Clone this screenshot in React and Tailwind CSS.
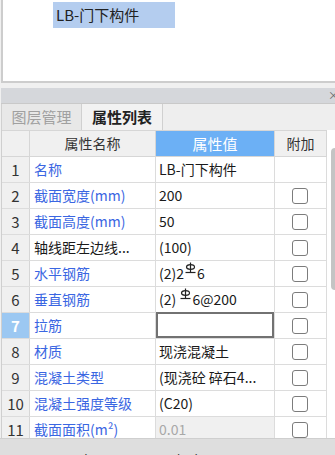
import React from "react";

const Rebar = () => (
  <svg width="11" height="12" viewBox="0 0 11 12" className="inline-block align-top mt-[1px] mx-[1px]" fill="none" stroke="#222" strokeWidth="1.2">
    <line x1="5.5" y1="0.5" x2="5.5" y2="10" />
    <ellipse cx="5.5" cy="5" rx="4" ry="2.3" />
    <line x1="0.5" y1="10.5" x2="10.5" y2="10.5" />
  </svg>
);

const rows = [
  { n: "1", name: "名称", val: "LB-门下构件", blue: true, noBox: true },
  { n: "2", name: "截面宽度(mm)", val: "200", blue: true },
  { n: "3", name: "截面高度(mm)", val: "50", blue: true },
  { n: "4", name: "轴线距左边线...", val: "(100)", blue: false },
  { n: "5", name: "水平钢筋", val: <>(2)2<Rebar />6</>, blue: true },
  { n: "6", name: "垂直钢筋", val: <>(2) <Rebar />6@200</>, blue: true },
  { n: "7", name: "拉筋", val: "", blue: true, active: true },
  { n: "8", name: "材质", val: "现浇混凝土", blue: true },
  { n: "9", name: "混凝土类型", val: "(现浇砼 碎石4...", blue: true },
  { n: "10", name: "混凝土强度等级", val: "(C20)", blue: true },
  { n: "11", name: "截面面积(m²)", val: "0.01", blue: true, grey: true },
];

const Check = () => (
  <div className="w-[16px] h-[16px] border border-[#7c7c7c] rounded-[3px] bg-white" />
);

export default function App() {
  return (
    <div className="w-[335px] h-[455px] overflow-hidden bg-[#f0f0f0] font-['Noto_Sans_CJK_SC',sans-serif] relative">
      {/* top panel */}
      <div className="h-[83px] bg-white border-l-2 border-b-2 border-[#cdcdcd] ml-[1px] pt-[2px] pl-[50px]">
        <div className="w-[122px] h-[26px] bg-[#b4cdef] text-[15px] leading-[26px] text-[#222] pl-[3px]">
          LB-门下构件
        </div>
      </div>
      <div className="h-[5px]" />
      {/* title bar */}
      <div className="h-[15px] bg-[#d5d7db] ml-[1px] flex justify-end items-center overflow-hidden">
        <span className="text-[11px] leading-[15px] text-[#666] mr-[-4px]">×</span>
      </div>
      {/* tabs */}
      <div className="h-[27px] ml-[1px] flex bg-[#eeeeee] border-t border-[#c9c9c9]">
        <div className="w-[81px] bg-[#e8e8e8] border-l border-[#d0d0d0] border-r text-[15px] leading-[26px] text-[#a0a0a0] text-center">
          图层管理
        </div>
        <div className="w-[81px] bg-[#f2f2f2] border-r border-[#d0d0d0] text-[15px] leading-[26px] font-bold text-[#222] text-center">
          属性列表
        </div>
        <div className="flex-1" />
      </div>
      {/* table */}
      <div className="flex">
        <div className="ml-[1px] border-l border-[#cfcfcf] bg-white">
          {/* header */}
          <div className="flex h-[27px] border-t border-b border-[#d6d6d6]">
            <div className="w-[28px] bg-[#f0f0f0] border-r border-[#d6d6d6]" />
            <div className="w-[126px] bg-[#f0f0f0] border-r border-[#d6d6d6] text-[14px] leading-[25px] text-[#333] text-center">
              属性名称
            </div>
            <div className="w-[119px] bg-[#6cb0f5] border-r border-[#d6d6d6] text-[15px] leading-[25px] text-white text-center">
              属性值
            </div>
            <div className="w-[52px] bg-[#f0f0f0] border-r border-[#d6d6d6] text-[14px] leading-[25px] text-[#333] text-center">
              附加
            </div>
          </div>
          {rows.map((r) => (
            <div key={r.n} className="flex h-[26px] border-b border-[#dcdcdc]">
              <div
                className={
                  r.active
                    ? "w-[28px] bg-[#9cc8f2] border-r border-[#d6d6d6] text-[15px] leading-[25px] text-white font-bold text-center"
                    : "w-[28px] bg-[#f0f0f0] border-r border-[#d6d6d6] text-[15px] leading-[25px] text-[#333] text-center"
                }
              >
                {r.n}
              </div>
              <div
                className={
                  r.blue
                    ? "w-[126px] border-r border-[#dcdcdc] text-[14px] leading-[25px] text-[#3a66e2] pl-[4px] whitespace-nowrap overflow-hidden"
                    : "w-[126px] border-r border-[#dcdcdc] text-[14px] leading-[25px] text-[#1a1a1a] pl-[4px] whitespace-nowrap overflow-hidden"
                }
              >
                {r.name}
              </div>
              {r.active ? (
                <div className="w-[119px] border-r border-[#dcdcdc] p-0">
                  <div className="h-[26px] -mt-[1px] border-2 border-[#727272] bg-white" />
                </div>
              ) : (
                <div
                  className={
                    r.grey
                      ? "w-[119px] bg-[#f0f0f0] border-r border-[#dcdcdc] text-[14px] leading-[25px] text-[#a8a8a8] pl-[3px] whitespace-nowrap overflow-hidden"
                      : "w-[119px] border-r border-[#dcdcdc] text-[14px] leading-[25px] text-[#1a1a1a] pl-[3px] whitespace-nowrap overflow-hidden"
                  }
                >
                  {r.val}
                </div>
              )}
              <div className="w-[52px] border-r border-[#dcdcdc] flex items-center justify-center pr-[2px]">
                {r.noBox ? null : <Check />}
              </div>
            </div>
          ))}
        </div>
        {/* scrollbar */}
        <div className="flex-1 bg-white pl-[4px] pt-[18px]">
          <div className="h-[142px] bg-[#c4c4c4] rounded-l-[4px]" />
        </div>
      </div>
      {/* status strip */}
      <div className="absolute left-0 top-[438px] w-[335px] h-[17px] bg-[#dedede] border-t border-[#cfcfcf] overflow-hidden">
        <div className="flex text-[14px] leading-[20px] text-[#333] mt-[11px] whitespace-nowrap">
          <span className="ml-[65px]">层高</span>
          <span className="ml-[30px]">0.05</span>
          <span className="ml-[25px]">标高</span>
          <span className="ml-[26px]">0.05~2.0</span>
        </div>
      </div>
    </div>
  );
}
